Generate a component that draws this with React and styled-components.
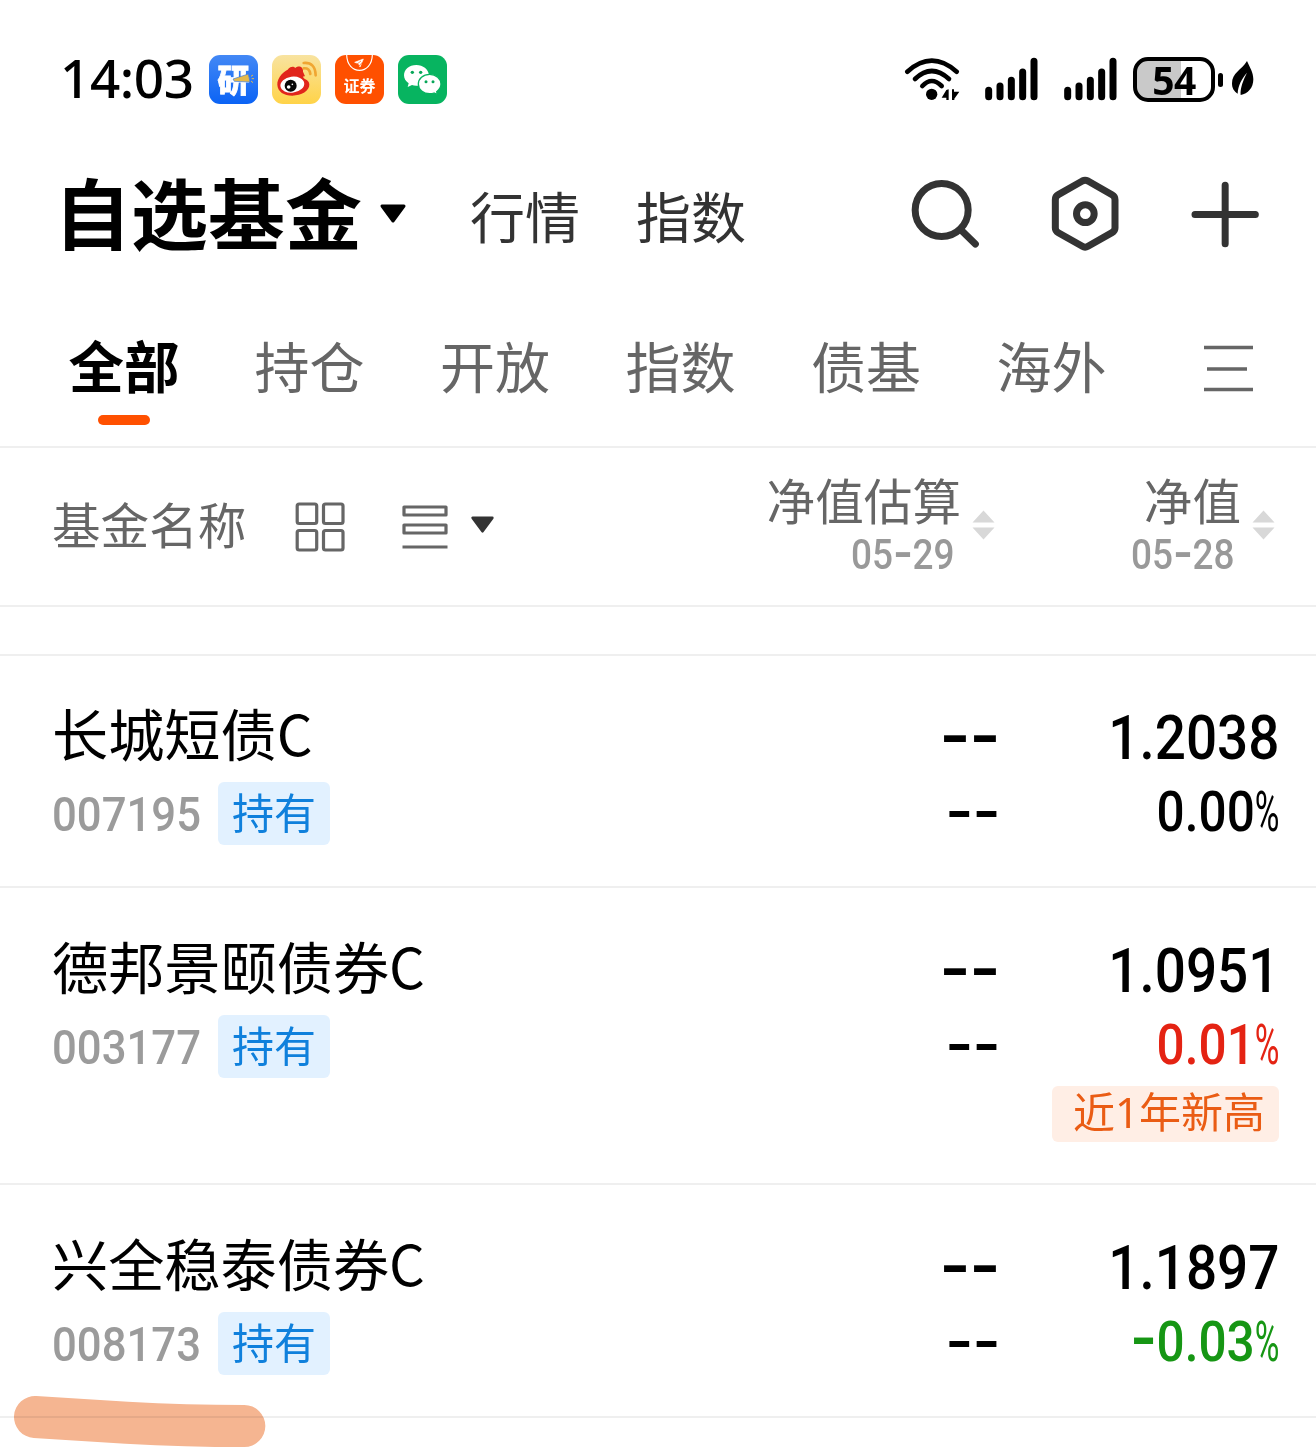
import React from 'react';
import styled, { createGlobalStyle } from 'styled-components';

const CJK = '"Noto Sans CJK SC", sans-serif';
const DIGITS = 'Roboto, "Noto Sans CJK SC", sans-serif';

const GlobalStyle = createGlobalStyle`
  * { box-sizing: border-box; }
  body { margin: 0; background: #fff; }
`;

const Screen = styled.main`
  position: relative;
  width: 1316px;
  height: 1448px;
  overflow: hidden;
  background: #fff;
  color: #000;
  font-family: ${CJK};
  svg { display: block; flex: none; }
`;

/* ---------- status bar ---------- */
const StatusBar = styled.div`
  display: flex;
  justify-content: space-between;
  height: 157px;
  padding: 54px 62px 0 60px;
`;

const StatusLeft = styled.div`
  display: flex;
  align-items: center;
  height: 50px;
`;

const Clock = styled.span`
  width: 149px;
  font: 500 53px/50px "Noto Sans", sans-serif;
  letter-spacing: -0.4px;
  transform: translateY(-1px);
`;

const AppIcons = styled.div`
  display: flex;
  gap: 14px;
`;

const AppIcon = styled.div`
  position: relative;
  width: 49px;
  height: 49px;
  border-radius: 11px;
  overflow: hidden;
  background: ${(p) => p.$bg};
`;

const YanLabel = styled.span`
  display: block;
  font: 900 32px/47px ${CJK};
  color: #fff;
  text-align: center;
  -webkit-text-stroke: 0.8px #fff;
`;

const SecLabel = styled.span`
  position: absolute;
  left: 0;
  right: 0;
  top: 20px;
  font: 700 16px/20px ${CJK};
  color: #fff;
  text-align: center;
`;

const Overlay = styled.svg`
  position: absolute;
  inset: 0;
`;

const StatusRight = styled.div`
  display: flex;
  height: 50px;
`;

const SignalSlot = styled.div`
  margin-left: ${(p) => p.$gap}px;
`;

const Battery = styled.div`
  width: 82px;
  height: 45px;
  margin: 3px 0 0 15px;
  border: 4px solid #000;
  border-radius: 15px;
  background: linear-gradient(90deg, #c9c9c9 0 44px, #fff 44px);
  font: 700 39px/37px "Noto Sans", sans-serif;
  text-align: center;
  letter-spacing: -0.5px;
`;

const BatteryNub = styled.div`
  width: 5px;
  height: 14px;
  margin: 19px 9px 0 3px;
  border-radius: 3px;
  background: #000;
`;

const LeafSlot = styled.div`
  padding-top: 7px;
`;

/* ---------- title bar ---------- */
const TitleBar = styled.header`
  display: flex;
  align-items: center;
  height: 116px;
  padding: 0 57px 0 54px;
`;

const Title = styled.h1`
  width: 308px;
  margin: 0;
  font: 700 77px/100px ${CJK};
  white-space: nowrap;
  transform: translateY(-4px);
`;

const TitleArrow = styled.div`
  margin: 0 64px 2px 17px;
`;

const HeaderLink = styled.a`
  margin-right: 56px;
  font: 400 55px/80px ${CJK};
  color: #333;
  transform: translate(-1px, -1px);
`;

const Actions = styled.div`
  display: flex;
  gap: 72px;
  margin: 0 0 2px auto;
`;

/* ---------- category tabs ---------- */
const Tabs = styled.nav`
  display: flex;
  height: 175px;
  padding: 54px 62px 0 69px;
  border-bottom: 2px solid #efefef;
`;

const Tab = styled.a`
  display: flex;
  flex-direction: column;
  align-items: center;
  width: 110px;
  margin-right: 75.5px;
  font: ${(p) => (p.$active ? 700 : 400)} ${(p) => (p.$active ? 55.5 : 55)}px/74px ${CJK};
  color: ${(p) => (p.$active ? '#000' : '#666')};
  white-space: nowrap;
`;

const TabMark = styled.span`
  width: 52px;
  height: 10px;
  margin-top: 14px;
  border-radius: 5px;
  background: #ff5000;
`;

const MenuSlot = styled.div`
  margin: 18px 0 0 auto;
`;

/* ---------- table ---------- */
const TableHead = styled.div`
  display: flex;
  height: 159px;
  padding-left: 52px;
  border-bottom: 2px solid #efefef;
`;

const HeadName = styled.div`
  display: flex;
  align-items: center;
  width: 450px;
  height: 158px;
`;

const HeadLabel = styled.span`
  font: 400 48.6px/60px ${CJK};
  color: #666;
  white-space: nowrap;
`;

const NameLabel = styled(HeadLabel)`
  flex: none;
  margin-right: 49px;
  transform: translateY(-4px);
`;

const ArrowSlot = styled.div`
  margin: 0 0 4px 22px;
`;

const ListSlot = styled.div`
  margin-left: 56px;
`;

const HeadValue = styled.div`
  display: flex;
  justify-content: flex-end;
  width: ${(p) => p.$width}px;
  padding-top: 21px;
`;

const HeadTexts = styled.div`
  display: flex;
  flex-direction: column;
  align-items: flex-end;
`;

const DateLine = styled.div`
  padding: 1px 6px 0 0;
`;

const SortSlot = styled.div`
  margin: 41px 0 0 11px;
`;

const Spacer = styled.div`
  height: 49px;
  border-bottom: 2px solid #efefef;
  margin-bottom: -1px;
`;

const Row = styled.section`
  display: grid;
  grid-template-columns: 1fr 300px 279px;
  height: ${(p) => p.$height}px;
  padding: 0 37px 0 52px;
  border-bottom: 2px solid #efefef;
`;

const FundCell = styled.div`
  padding-top: 37px;
`;

const FundName = styled.div`
  font: 400 56.2px/80px ${CJK};
`;

const FundMeta = styled.div`
  display: flex;
  align-items: center;
  height: 63px;
  margin-top: 10px;
`;

const CodeBox = styled.div`
  width: 166px;
  padding-top: 2px;
`;

const HoldTag = styled.span`
  width: 112px;
  height: 63px;
  border-radius: 6px;
  background: #e2f1ff;
  font: 400 42px/57px ${CJK};
  color: #0f80dc;
  text-align: center;
`;

const ValueCell = styled.div`
  display: flex;
  flex-direction: column;
  align-items: flex-end;
  padding-top: ${(p) => p.$top}px;
`;

const Dashes = styled.span`
  height: ${(p) => (p.$small ? 60 : 72)}px;
  margin-bottom: ${(p) => (p.$small ? 0 : 9)}px;
  font: 400 ${(p) => (p.$small ? 75 : 83)}px/${(p) => (p.$small ? 48 : 60)}px "DejaVu Sans", sans-serif;
`;

const Num = styled.span`
  display: block;
  font-family: ${DIGITS};
  font-size: ${(p) => p.$size}px;
  line-height: ${(p) => p.$line}px;
  font-weight: ${(p) => p.$weight || 400};
  color: ${(p) => p.$color || '#000'};
  white-space: nowrap;
  transform: scaleX(${(p) => p.$scale || 0.9});
  transform-origin: ${(p) => p.$origin || 'right'} center;
`;

const ChangeSlot = styled.div`
  margin-top: 8px;
`;

const Minus = styled.span`
  font-family: "DejaVu Sans", sans-serif;
  font-size: 1.46em;
  line-height: 0;
  font-weight: 400;
  vertical-align: -0.03em;
`;

const Percent = styled.span`
  display: inline-block;
  width: 0.49em;
  font-weight: 400;
  transform: scaleX(0.68);
  transform-origin: left center;
`;

const Figure = ({ text, ...rest }) => (
  <Num {...rest}>
    {[...text].map((ch, i) => {
      if (ch === '-') return <Minus key={i}>-</Minus>;
      if (ch === '%') return <Percent key={i}>%</Percent>;
      return ch;
    })}
  </Num>
);

const HighTag = styled.span`
  width: 227px;
  height: 56px;
  margin-top: 11px;
  padding-left: 21px;
  border-radius: 6px;
  background: #ffeee5;
  font: 400 42px/52px "Noto Sans", ${CJK};
  color: #ea5c14;
  white-space: nowrap;
`;

const Stroke = styled.svg`
  position: absolute;
  left: 0;
  top: 1380px;
  mix-blend-mode: multiply;
`;

/* ---------- drawings ---------- */
const Wifi = () => (
  <svg width="58" height="48" viewBox="39 42 174 144" fill="none" stroke="#000" strokeWidth="14" strokeLinecap="round">
    <path d="M52 95Q125 29 200 95" />
    <path d="M75 117Q125 69 177 117" />
    <path d="M97 138Q125 108 155 138" />
    <circle cx="125" cy="163" r="17" fill="#000" stroke="none" />
    <path d="M176 148V180H169V173H155L169 150ZM186 180V148H192V155H208L193 176V180Z" fill="#000" stroke="none" />
  </svg>
);

const Signal = () => (
  <svg width="55" height="48" viewBox="282 42 165 144" stroke="#000" strokeWidth="21" strokeLinecap="round">
    <path d="M296 151V170M330 138V170M364 121V170M398 96V170M432 64V170" />
  </svg>
);

const Leaf = () => (
  <svg width="22" height="34" viewBox="1028 64 66 102">
    <path d="M1073 64C1081 83 1092 97 1092 119C1092 145 1076 162 1054 166C1052 145 1062 121 1073 99C1057 117 1046 138 1045 162C1034 155 1028 146 1028 131C1028 99 1056 92 1073 64Z" />
  </svg>
);

const DownArrow = ({ w, h, color }) => (
  <svg width={w} height={h} viewBox="0 0 28 20">
    <path d="M3 2H25L14 17Z" fill={color} stroke={color} strokeWidth="3" strokeLinejoin="round" />
  </svg>
);

const Search = () => (
  <svg width="70" height="76" viewBox="88 48 210 228" fill="none" stroke="#333" strokeWidth="21" strokeLinecap="round">
    <circle cx="186" cy="150" r="79.5" />
    <path d="M244 210L287 252" />
  </svg>
);

const Hexagon = () => (
  <svg width="68" height="76" viewBox="514 48 204 228" fill="none" stroke="#333" strokeWidth="21" strokeLinejoin="round">
    <path d="M608 63Q616 59 625 63L697 104Q706 109 706 119V204Q706 213 697 218L625 259Q616 264 608 259L536 218Q527 213 527 204V119Q527 109 536 104Z" />
    <circle cx="617" cy="161" r="26.5" />
  </svg>
);

const Plus = () => (
  <svg width="68" height="76" viewBox="934 48 204 228" stroke="#333" strokeWidth="21" strokeLinecap="round">
    <path d="M946 163.500H1127M1036.500 76V251" />
  </svg>
);

const Menu = () => (
  <svg width="51" height="48" viewBox="0 0 51 48" stroke="#666" strokeWidth="3.600">
    <path d="M1 2.500H50M4 24H44M1 44.500H50" />
  </svg>
);

const GridIcon = () => (
  <svg width="51" height="51" viewBox="0 0 51 51" fill="none" stroke="#666" strokeWidth="3.200">
    <rect x="2.200" y="2" width="19.500" height="19.500" rx="2" />
    <rect x="28.500" y="2" width="19.500" height="19.500" rx="2" />
    <rect x="2.200" y="28.500" width="19.500" height="19.500" rx="2" />
    <rect x="28.500" y="28.500" width="19.500" height="19.500" rx="2" />
  </svg>
);

const ListIcon = () => (
  <svg width="46" height="44" viewBox="0 0 46 44" fill="none" stroke="#666" strokeWidth="3.200">
    <path d="M2 2H44V10H2ZM2 20H44V28H2ZM0.500 42H45.500" strokeLinejoin="round" />
  </svg>
);

const Sort = () => (
  <svg width="23" height="30" viewBox="0 0 23 30" fill="#d8d8d8">
    <path d="M11.500 0.500L22.500 12.500H0.500ZM0.500 17.500H22.500L11.500 29.500Z" />
  </svg>
);

const Pencil = () => (
  <Overlay width="49" height="49" viewBox="507 44 147 147">
    <path d="M579 116L625 101L630 125L583 123Z" fill="#e5b94b" stroke="#3b78e0" strokeWidth="2" />
    <path d="M633 108L639 104M635 115H642M633 122L639 127" stroke="#e5b94b" strokeWidth="3" />
  </Overlay>
);

const Weibo = () => (
  <Overlay width="49" height="49" viewBox="696 44 147 147">
    <path d="M712 133C710 112 738 83 755 86C763 88 761 97 759 102C774 95 793 96 790 111C788 116 807 117 808 132C809 152 784 166 757 166C732 166 713 154 712 133Z" fill="#e1251b" />
    <path d="M742 99C738 85 757 73 766 83C773 75 791 77 789 94L795 108L760 108Z" fill="#e1251b" />
    <ellipse cx="757" cy="133" rx="36" ry="24" fill="#fff" transform="rotate(-8 757 133)" />
    <circle cx="752" cy="136" r="18" fill="#080808" />
    <circle cx="746" cy="140" r="5.500" fill="#fff" />
    <circle cx="757" cy="132" r="2.500" fill="#fff" />
    <path d="M791 68Q826 65 827 105M791 84Q809 82 811 101" fill="none" stroke="#f0a632" strokeWidth="8" strokeLinecap="round" />
  </Overlay>
);

const Badge = () => (
  <Overlay width="49" height="49" viewBox="885 44 147 147" fill="none" stroke="#fff">
    <path d="M920 42C920 106 997 106 997 42" strokeWidth="3.500" />
    <path d="M944 66L970 56L960 80L956 70Z" fill="#fff" strokeWidth="2" />
    <path d="M950 72L963 62M956 78L967 66" stroke="#ff5a10" strokeWidth="2" />
  </Overlay>
);

const WeChat = () => (
  <Overlay width="49" height="49" viewBox="1074 44 147 147">
    <path d="M1129 74C1107 74 1092 88 1092 105C1092 115 1097 123 1106 129L1103 140L1116 134Q1123 137 1134 136C1160 135 1168 119 1167 104C1165 87 1149 74 1129 74Z" fill="#fff" />
    <path d="M1169 102C1149 102 1135 115 1135 131C1135 148 1150 160 1169 160Q1177 160 1182 158L1193 163L1190 154C1198 148 1203 141 1203 131C1203 115 1188 102 1169 102Z" fill="#fff" stroke="#07b460" strokeWidth="4" />
    <g fill="#07a658">
      <circle cx="1117" cy="96" r="5" /><circle cx="1142" cy="96" r="5" />
      <circle cx="1158" cy="124" r="4.500" /><circle cx="1179" cy="124" r="4.500" />
    </g>
  </Overlay>
);

/* ---------- data ---------- */
const tabs = ['全部', '持仓', '开放', '指数', '债基', '海外'];

const funds = [
  { name: '长城短债C', code: '007195', nav: '1.2038', change: '0.00%', color: '#000', height: 233 },
  { name: '德邦景颐债券C', code: '003177', nav: '1.0951', change: '0.01%', color: '#e42313', tag: '近1年新高', height: 297 },
  { name: '兴全稳泰债券C', code: '008173', nav: '1.1897', change: '-0.03%', color: '#169614', height: 233 },
];

const ValueHead = ({ label, date, width }) => (
  <HeadValue $width={width}>
    <HeadTexts>
      <HeadLabel>{label}</HeadLabel>
      <DateLine>
        <Figure text={date} $size={42} $line={50} $weight={500} $scale={0.88} $color="#999" />
      </DateLine>
    </HeadTexts>
    <SortSlot><Sort /></SortSlot>
  </HeadValue>
);

export default function App() {
  return (
    <Screen>
      <GlobalStyle />
      <StatusBar>
        <StatusLeft>
          <Clock>14:03</Clock>
          <AppIcons>
            <AppIcon $bg="linear-gradient(#4388f5, #0b63f5)"><YanLabel>研</YanLabel><Pencil /></AppIcon>
            <AppIcon $bg="linear-gradient(#f8e3a0, #ffd348)"><Weibo /></AppIcon>
            <AppIcon $bg="#ff5000"><SecLabel>证券</SecLabel><Badge /></AppIcon>
            <AppIcon $bg="#07b460"><WeChat /></AppIcon>
          </AppIcons>
        </StatusLeft>
        <StatusRight>
          <Wifi />
          <SignalSlot $gap={23}><Signal /></SignalSlot>
          <SignalSlot $gap={24}><Signal /></SignalSlot>
          <Battery>54</Battery>
          <BatteryNub />
          <LeafSlot><Leaf /></LeafSlot>
        </StatusRight>
      </StatusBar>

      <TitleBar>
        <Title>自选基金</Title>
        <TitleArrow><DownArrow w={28} h={20} color="#000" /></TitleArrow>
        <HeaderLink>行情</HeaderLink>
        <HeaderLink>指数</HeaderLink>
        <Actions><Search /><Hexagon /><Plus /></Actions>
      </TitleBar>

      <Tabs>
        {tabs.map((t, i) => (
          <Tab key={t + i} $active={i === 0}>{t}{i === 0 && <TabMark />}</Tab>
        ))}
        <MenuSlot><Menu /></MenuSlot>
      </Tabs>

      <TableHead>
        <HeadName>
          <NameLabel>基金名称</NameLabel>
          <GridIcon />
          <ListSlot><ListIcon /></ListSlot>
          <ArrowSlot><DownArrow w={25} h={18} color="#333" /></ArrowSlot>
        </HeadName>
        <ValueHead label="净值估算" date="05-29" width={493} />
        <ValueHead label="净值" date="05-28" width={280} />
      </TableHead>
      <Spacer />

      {funds.map((f) => (
        <Row key={f.code} $height={f.height}>
          <FundCell>
            <FundName>{f.name}</FundName>
            <FundMeta>
              <CodeBox><Figure text={f.code} $size={48} $line={63} $weight={500} $scale={0.91} $origin="left" $color="#9b9b9b" /></CodeBox>
              <HoldTag>持有</HoldTag>
            </FundMeta>
          </FundCell>
          <ValueCell $top={49}>
            <Dashes>--</Dashes>
            <Dashes $small>--</Dashes>
          </ValueCell>
          <ValueCell $top={47}>
            <Figure text={f.nav} $size={62} $line={72} $weight={500} $scale={0.885} />
            <ChangeSlot>
              <Figure text={f.change} $size={55} $line={60} $weight={500} $color={f.color} />
            </ChangeSlot>
            {f.tag && <HighTag>{f.tag}</HighTag>}
          </ValueCell>
        </Row>
      ))}

      <Stroke width="300" height="68" viewBox="0 0 900 204">
        <path d="M105 111L380 128Q560 138 733 138" fill="none" stroke="#f5b591" strokeWidth="126" strokeLinecap="round" />
      </Stroke>
    </Screen>
  );
}
